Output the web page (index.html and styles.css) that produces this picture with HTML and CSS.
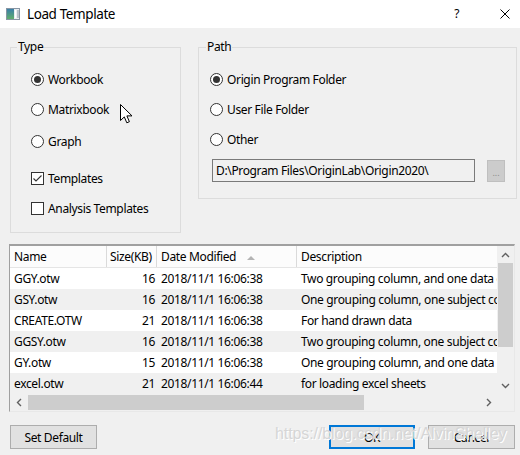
FILE: index.html
```html
<!DOCTYPE html>
<html lang="en">
<head>
<meta charset="utf-8">
<title>Load Template</title>
<link rel="stylesheet" href="styles.css">
</head>
<body>
<div class="window">
  <header class="titlebar">
    <svg class="app-icon" width="14" height="12" viewBox="0 0 14 12">
      <defs>
        <linearGradient id="g1" x1="0" y1="0" x2="0" y2="1">
          <stop offset="0" stop-color="#3a7fa8"/>
          <stop offset="1" stop-color="#5fae6c"/>
        </linearGradient>
      </defs>
      <rect x="0.5" y="0.5" width="13" height="11" fill="#e9edf0" stroke="#8795a3"/>
      <rect x="1" y="1" width="7" height="10" fill="url(#g1)"/>
      <rect x="9" y="2" width="1" height="8" fill="#fff"/>
      <rect x="11" y="2" width="2" height="8" fill="#b9c2ca"/>
    </svg>
    <span class="title">Load Template</span>
    <span class="help">?</span>
    <svg class="close" width="10" height="10" viewBox="0 0 10 10">
      <path d="M0.5 0.5 L9.5 9.5 M9.5 0.5 L0.5 9.5" stroke="#000" stroke-width="1" fill="none"/>
    </svg>
  </header>

  <main class="content">
    <div class="groups">
      <fieldset class="group type-group">
        <legend>Type</legend>
        <div class="opt"><span class="radio checked"></span>Workbook</div>
        <div class="opt"><span class="radio"></span>Matrixbook</div>
        <div class="opt opt-graph"><span class="radio"></span>Graph</div>
        <div class="opt opt-tpl"><span class="check checked">
          <svg width="11" height="11" viewBox="0 0 11 11"><path d="M1.5 5.5 L4 8 L9.5 2.5" stroke="#333" stroke-width="1.1" fill="none"/></svg>
        </span>Templates</div>
        <div class="opt"><span class="check"></span>Analysis Templates</div>
      </fieldset>

      <fieldset class="group path-group">
        <legend>Path</legend>
        <div class="opt"><span class="radio checked"></span>Origin Program Folder</div>
        <div class="opt"><span class="radio"></span>User File Folder</div>
        <div class="opt"><span class="radio"></span>Other</div>
        <div class="path-field">
          <div class="path-input">D:\Program Files\OriginLab\Origin2020\</div>
          <div class="browse">...</div>
        </div>
      </fieldset>
    </div>

    <div class="table">
      <div class="table-body">
        <div class="thead row">
          <div class="cell c-name">Name</div>
          <div class="cell c-size hcell-size">Size(KB)</div>
          <div class="cell c-date">Date Modified <span class="sort"></span></div>
          <div class="cell c-desc">Description</div>
        </div>
        <div class="row">
          <div class="cell c-name">GGY.otw</div>
          <div class="cell c-size">16</div>
          <div class="cell c-date">2018/11/1 16:06:38</div>
          <div class="cell c-desc">Two grouping column, and one data column</div>
        </div>
        <div class="row alt">
          <div class="cell c-name">GSY.otw</div>
          <div class="cell c-size">16</div>
          <div class="cell c-date">2018/11/1 16:06:38</div>
          <div class="cell c-desc">One grouping column, one subject column</div>
        </div>
        <div class="row">
          <div class="cell c-name">CREATE.OTW</div>
          <div class="cell c-size">21</div>
          <div class="cell c-date">2018/11/1 16:06:38</div>
          <div class="cell c-desc">For hand drawn data</div>
        </div>
        <div class="row alt">
          <div class="cell c-name">GGSY.otw</div>
          <div class="cell c-size">16</div>
          <div class="cell c-date">2018/11/1 16:06:38</div>
          <div class="cell c-desc">Two grouping column, one subject column</div>
        </div>
        <div class="row">
          <div class="cell c-name">GY.otw</div>
          <div class="cell c-size">15</div>
          <div class="cell c-date">2018/11/1 16:06:38</div>
          <div class="cell c-desc">One grouping column, and one data column</div>
        </div>
        <div class="row alt">
          <div class="cell c-name">excel.otw</div>
          <div class="cell c-size">21</div>
          <div class="cell c-date">2018/11/1 16:06:44</div>
          <div class="cell c-desc">for loading excel sheets</div>
        </div>
      </div>

      <div class="vscroll">
        <div class="arrow">
          <svg width="9" height="6" viewBox="0 0 9 6"><path d="M1 5 L4.5 1.5 L8 5" stroke="#606060" stroke-width="1.4" fill="none"/></svg>
        </div>
        <div class="vtrack"><div class="vthumb"></div></div>
        <div class="arrow">
          <svg width="9" height="6" viewBox="0 0 9 6"><path d="M1 1 L4.5 4.5 L8 1" stroke="#606060" stroke-width="1.4" fill="none"/></svg>
        </div>
      </div>

      <div class="hscroll">
        <div class="arrow">
          <svg width="6" height="9" viewBox="0 0 6 9"><path d="M5 1 L1.5 4.5 L5 8" stroke="#606060" stroke-width="1.4" fill="none"/></svg>
        </div>
        <div class="htrack"><div class="hthumb"></div></div>
        <div class="arrow">
          <svg width="6" height="9" viewBox="0 0 6 9"><path d="M1 1 L4.5 4.5 L1 8" stroke="#606060" stroke-width="1.4" fill="none"/></svg>
        </div>
      </div>
      <div class="corner"></div>
    </div>

    <div class="buttons">
      <button class="btn btn-default">Set Default</button>
      <button class="btn btn-ok">OK</button>
      <button class="btn btn-cancel">Cancel</button>
    </div>
  </main>

  <div class="watermark">https://blog.csdn.net/AlvinShelley</div>

  <svg class="cursor" width="14" height="21" viewBox="0 0 14 21">
    <path d="M0.5 0.5 L0.5 16.5 L4.3 12.9 L6.8 18.8 L9.4 17.7 L6.9 11.9 L12 11.9 Z" fill="#fff" stroke="#000" stroke-width="1" stroke-linejoin="miter"/>
  </svg>
</div>
</body>
</html>
```

FILE: styles.css
```css
* {
  box-sizing: border-box;
}

body {
  margin: 0;
  background: #f0f0f0;
  font-family: "Noto Sans", "Liberation Sans", sans-serif;
  font-size: 12px;
  letter-spacing: -0.35px;
  color: #000;
}

.window {
  position: relative;
  width: 520px;
  height: 455px;
  overflow: hidden;
  background: #f0f0f0;
}

/* Title bar */
.titlebar {
  height: 28px;
  background: #fff;
  display: flex;
  align-items: center;
  padding-bottom: 1px;
}

.app-icon {
  margin-left: 6px;
  flex: none;
}

.title {
  margin-left: 7px;
  font-size: 13.5px;
  letter-spacing: -0.4px;
}

.help {
  margin-left: auto;
  font-size: 12px;
  margin-right: 41px;
}

.close {
  margin-right: 10px;
  flex: none;
}

/* Content */
.content {
  display: flex;
  flex-direction: column;
}

.groups {
  display: flex;
  align-items: flex-start;
  gap: 17px;
  padding: 11px 0 0 10px;
}

.group {
  margin: 0;
  min-width: 0;
  border: 1px solid #dcdcdc;
  display: flex;
  flex-direction: column;
  gap: 10px;
}

.group legend {
  padding: 0 1px;
  line-height: 16px;
  font-size: 12px;
}

.type-group {
  width: 171px;
  padding: 14px 0 14px 20px;
}

.type-group legend {
  margin-left: -14px;
}

.path-group {
  width: 319px;
  padding: 14px 0 16px 11px;
}

.path-group legend {
  margin-left: -4px;
}

.opt {
  display: flex;
  align-items: center;
  height: 20px;
  gap: 4px;
  white-space: nowrap;
}

.opt-graph {
  margin-top: 2px;
}

.opt-tpl {
  margin-top: 7px;
}

.radio {
  width: 13px;
  height: 13px;
  border: 1px solid #333;
  border-radius: 50%;
  background: #fff;
  flex: none;
  display: flex;
  align-items: center;
  justify-content: center;
}

.radio.checked::after {
  content: "";
  width: 7px;
  height: 7px;
  border-radius: 50%;
  background: #333;
}

.check {
  width: 13px;
  height: 13px;
  border: 1px solid #333;
  background: #fff;
  flex: none;
  display: flex;
  align-items: center;
  justify-content: center;
}

.path-field {
  display: flex;
  align-items: flex-start;
  gap: 12px;
  margin-left: 2px;
}

.path-input {
  width: 263px;
  height: 23px;
  border: 1px solid #7a7a7a;
  background: #f0f0f0;
  padding-left: 3px;
  line-height: 21px;
  white-space: nowrap;
  overflow: hidden;
}

.browse {
  width: 18px;
  height: 22px;
  margin-top: 1px;
  background: #cccccc;
  border: 1px solid #bfbfbf;
  color: #8c8c8c;
  font-size: 9px;
  letter-spacing: 0;
  line-height: 24px;
  text-align: center;
}

/* Table */
.table {
  margin: 11px 0 0 9px;
  width: 506px;
  display: grid;
  grid-template-columns: 487px 17px;
  grid-template-rows: 148px 17px;
  border-top: 2px solid #a0a0a0;
  border-left: 1px solid #a0a0a0;
  border-right: 1px solid #e8e8e8;
  border-bottom: 1px solid #e8e8e8;
  background: #fff;
}

.table-body {
  overflow: hidden;
  background: #fff;
}

.row {
  display: grid;
  grid-template-columns: 97px 50px 140px 200px;
  height: 21px;
  line-height: 21px;
  background: #fff;
}

.row.alt {
  background: #f0f0f0;
}

.thead {
  height: 22px;
  line-height: 21px;
  background: #fcfcfc;
  border-bottom: 1px solid #e5e5e5;
}

.cell {
  white-space: nowrap;
  overflow: hidden;
  padding-left: 4px;
}

.thead .cell {
  border-right: 1px solid #dadada;
}

.thead .c-desc {
  border-right: none;
}

.c-size {
  text-align: right;
  padding-left: 0;
  padding-right: 2px;
}

.thead .hcell-size {
  text-align: left;
  padding-left: 3px;
}

.sort {
  display: inline-block;
  width: 0;
  height: 0;
  margin-left: 8px;
  border-left: 4px solid transparent;
  border-right: 4px solid transparent;
  border-bottom: 4px solid #b4b4b4;
  vertical-align: 1px;
}

.vscroll {
  grid-row: 1;
  grid-column: 2;
  display: flex;
  flex-direction: column;
  background: #f0f0f0;
}

.arrow {
  width: 17px;
  height: 17px;
  flex: none;
  display: flex;
  align-items: center;
  justify-content: center;
}

.vtrack {
  flex: 1;
  padding: 0 1px;
}

.vthumb {
  height: 84px;
  background: #cdcdcd;
}

.hscroll {
  grid-row: 2;
  grid-column: 1;
  display: flex;
  background: #f0f0f0;
}

.htrack {
  flex: 1;
  padding: 1px 0;
  display: flex;
}

.hthumb {
  width: 336px;
  margin-left: 1px;
  background: #cdcdcd;
}

.corner {
  grid-row: 2;
  grid-column: 2;
  background: #f0f0f0;
}

/* Buttons */
.buttons {
  display: flex;
  align-items: center;
  margin-top: 13px;
  padding: 0 5px 0 10px;
}

.btn {
  height: 24px;
  font-family: inherit;
  font-size: 12px;
  letter-spacing: -0.35px;
  color: #000;
  background: #e1e1e1;
  border: 1px solid #adadad;
  padding: 0;
}

.btn-default {
  width: 87px;
}

.btn-ok {
  width: 86px;
  margin-left: auto;
  border: 2px solid #0078d7;
}

.btn-cancel {
  width: 87px;
  margin-left: 13px;
}

/* Overlays */
.watermark {
  position: absolute;
  left: 275px;
  top: 425px;
  font-family: "Liberation Sans", sans-serif;
  font-size: 16px;
  letter-spacing: -0.1px;
  color: #d6d6d6;
  text-shadow: 1px 1px 0 #ffffff;
  white-space: nowrap;
  pointer-events: none;
}

.cursor {
  position: absolute;
  left: 120px;
  top: 104px;
}
```
